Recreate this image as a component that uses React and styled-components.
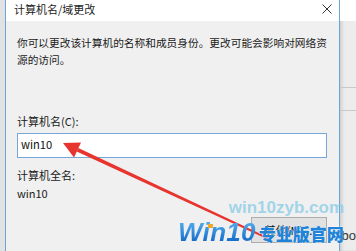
import React from "react";
import styled, { createGlobalStyle } from "styled-components";

const GlobalStyle = createGlobalStyle`
  html, body {
    margin: 0;
    padding: 0;
  }
  body {
    width: 356px;
    height: 251px;
    overflow: hidden;
    background: #e6e6e6;
    font-family: "Noto Sans CJK SC", "Noto Sans", sans-serif;
  }
`;

const Page = styled.div`
  position: relative;
  display: flex;
  width: 356px;
  height: 251px;
  overflow: hidden;
`;

const LeftStrip = styled.div`
  width: 5px;
  background: #e2e2e2;
`;

const Window = styled.div`
  width: 337px;
  display: flex;
  flex-direction: column;
  background: #f0f0f0;
  border-left: 1px solid #6ea3da;
  border-right: 1px solid #6ea3da;
`;

const TitleBar = styled.div`
  height: 21px;
  display: flex;
  align-items: center;
  justify-content: space-between;
  padding: 0 7px 4px 8px;
  box-sizing: border-box;
  background: #ffffff;
`;

const Title = styled.span`
  font-size: 11px;
  color: #222;
`;

const Body = styled.div`
  display: flex;
  flex-direction: column;
  padding: 13px 10px 0 11px;
`;

const Text = styled.div`
  font-size: ${(p) => p.$fs || 11}px;
  line-height: ${(p) => p.$lh || 16}px;
  color: #1a1a1a;
  margin-top: ${(p) => p.$mt || 0}px;
`;

const Input = styled.div`
  margin-top: 4px;
  margin-right: 2px;
  height: 25px;
  box-sizing: border-box;
  border: 1px solid #78a6da;
  background: #fff;
  padding: 2px 3px 0;
  font-size: 11.2px;
  line-height: 16px;
  color: #111;
`;

const Button = styled.div`
  align-self: flex-end;
  margin-top: 16px;
  margin-right: 2px;
  width: 76px;
  height: 26px;
  box-sizing: border-box;
  border: 1px solid #adadad;
  background: #e1e1e1;
  display: flex;
  align-items: center;
  justify-content: center;
  font-size: 11px;
  color: #111;
`;

const RightStrip = styled.div`
  flex: 1;
  display: flex;
  flex-direction: column;
  background: #ececec;
  box-shadow: inset 3px 0 4px -2px rgba(0, 0, 0, 0.18);
`;

const StripTop = styled.div`
  height: 21px;
  background: #fff;
`;

const StripLine = styled.div`
  height: 1px;
  background: #c9c9c9;
  margin-top: ${(p) => p.$mt}px;
`;

const StripText = styled.div`
  margin-top: auto;
  margin-bottom: 8px;
  padding-left: 2px;
  font-family: "Liberation Sans", sans-serif;
  font-size: 13px;
  color: #333;
`;

const ArrowLayer = styled.svg`
  position: absolute;
  left: 0;
  top: 0;
  pointer-events: none;
`;

const Watermark = styled.div`
  position: absolute;
  left: 178px;
  top: 199px;
  width: 178px;
  display: flex;
  flex-direction: column;
  align-items: flex-end;
`;

const Site = styled.div`
  margin-right: 12px;
  font-family: "Liberation Sans", sans-serif;
  font-weight: bold;
  font-size: 17px;
  line-height: 18px;
  color: rgba(140, 205, 230, 0.8);
`;

const Brand = styled.div`
  position: relative;
  display: flex;
  align-items: baseline;
  align-self: flex-start;
  margin-top: 2px;
`;

const BrandWin = styled.span`
  font-family: "Liberation Sans", sans-serif;
  font-style: italic;
  font-weight: bold;
  font-size: 26px;
  line-height: 26px;
  letter-spacing: 0.3px;
  background: linear-gradient(#5ab4f2, #0b62c4);
  -webkit-background-clip: text;
  background-clip: text;
  color: transparent;
`;

const Dot = styled.span`
  position: absolute;
  left: 30px;
  top: 5px;
  width: 5px;
  height: 4px;
  background: #f5a623;
`;

const BrandCn = styled.span`
  margin-left: 3px;
  font-family: "Noto Sans CJK SC", sans-serif;
  font-weight: 900;
  font-size: 17px;
  line-height: 22px;
  color: #1f84d8;
  -webkit-text-stroke: 0.6px #ffffff;
  paint-order: stroke fill;
`;

const CloseIcon = () => (
  <svg width="10" height="10" viewBox="0 0 10 10">
    <path d="M0.5 0.5 L9.5 9.5 M9.5 0.5 L0.5 9.5" stroke="#333" strokeWidth="1" />
  </svg>
);

export default function App() {
  return (
    <Page>
      <GlobalStyle />
      <LeftStrip />
      <Window>
        <TitleBar>
          <Title>计算机名/域更改</Title>
          <CloseIcon />
        </TitleBar>
        <Body>
          <Text $lh={17} $fs={10.7}>
            你可以更改该计算机的名称和成员身份。更改可能会影响对网络资源的访问。
          </Text>
          <Text $mt={45}>计算机名(C):</Text>
          <Input>win10</Input>
          <Text $mt={9}>计算机全名:</Text>
          <Text $mt={2}>win10</Text>
          <Button>其他(M)...</Button>
        </Body>
      </Window>
      <RightStrip>
        <StripTop />
        <StripLine $mt={66} />
        <StripLine $mt={22} />
        <StripText>bo</StripText>
      </RightStrip>
      <ArrowLayer width="356" height="251" viewBox="0 0 356 251">
        <polygon
          points="78.3,148 270.4,238.4 269.6,240.2 76.7,151.6"
          fill="#e8342f"
        />
        <polygon points="63,143 81,142.5 74,157.5" fill="#e8342f" />
      </ArrowLayer>
      <Watermark>
        <Site>win10zyb.com</Site>
        <Brand>
          <BrandWin>Win10</BrandWin>
          <Dot />
          <BrandCn>专业版官网</BrandCn>
        </Brand>
      </Watermark>
    </Page>
  );
}
